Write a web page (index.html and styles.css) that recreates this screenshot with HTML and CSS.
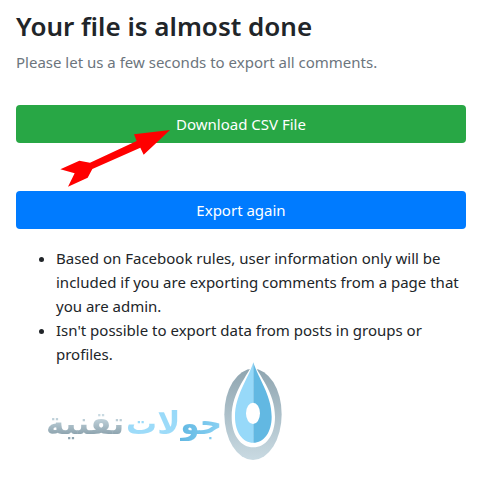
FILE: index.html
```html
<!DOCTYPE html>
<html lang="en">
<head>
    <meta charset="UTF-8">
    <meta name="viewport" content="width=device-width, initial-scale=1.0">
    <title>Your file is almost done</title>
    <link rel="stylesheet" href="styles.css">
</head>
<body>
    <main class="container">
        <h1>Your file is almost done</h1>
        <p class="text-muted">Please let us a few seconds to export all comments.</p>
        <div class="download">
            <button type="button" class="btn btn-success">Download CSV File</button>
            <svg class="arrow" viewBox="60 99 333 180" aria-hidden="true">
                <path fill="#ff0000" d="M390 105 282 118 290 138 150 203 118 197 61 223 104 235 84 275 143 248 157 222 301 158 311 179Z"/>
            </svg>
        </div>
        <button type="button" class="btn btn-primary">Export again</button>
        <ul class="notes">
            <li>Based on Facebook rules, user information only will be included if you are exporting comments from a page that you are admin.</li>
            <li>Isn't possible to export data from posts in groups or profiles.</li>
        </ul>
        <div class="logo" dir="rtl" lang="ar">
            <svg class="drop" viewBox="39 22 174 294" aria-hidden="true">
                <defs>
                    <linearGradient id="ring" x1="0" y1="0" x2="0" y2="1">
                        <stop offset="0" stop-color="#8fa5b0"/>
                        <stop offset="1" stop-color="#c9dae2"/>
                    </linearGradient>
                </defs>
                <ellipse cx="126" cy="179" rx="86" ry="137" fill="url(#ring)"/>
                <path fill="#ffffff" d="M127 22C111 62 62 112 62 186C62 242 90 278 127 278S192 242 192 186C192 112 143 62 127 22Z"/>
                <path fill="#97d9f9" d="M127 23C111 74 72 122 72 186C72 234 96 264 127 264Z"/>
                <path fill="#62b8e2" d="M127 23C143 74 182 122 182 186C182 234 158 264 127 264Z"/>
                <ellipse cx="126" cy="176" rx="21" ry="32" fill="#ffffff"/>
            </svg>
            <div class="logo-text">
                <div><span class="deep">جو</span><span class="light">لات</span></div>
                <div><span class="grey">تقنية</span></div>
            </div>
        </div>
    </main>
</body>
</html>
```
FILE: styles.css
```css
* {
    box-sizing: border-box;
}
body {
    margin: 0;
    background-color: #ffffff;
    color: #212529;
    font-family: "Segoe UI", "Noto Sans", sans-serif;
    font-size: 15px;
    line-height: 24px;
}
.container {
    padding: 9px 12px 20px 16px;
}
h1 {
    margin: 0 0 7px;
    font-size: 26px;
    font-weight: 600;
    line-height: 34px;
}
.text-muted {
    margin: 0 0 31px;
    color: #6c757d;
}
.download {
    position: relative;
    margin-bottom: 48px;
}
.btn {
    display: block;
    width: 100%;
    padding: 7px 12px;
    border: none;
    border-radius: 4px;
    color: #ffffff;
    font-family: inherit;
    font-size: 15px;
    line-height: 24px;
    cursor: pointer;
}
.btn-success {
    background-color: #28a745;
}
.btn-primary {
    background-color: #007bff;
}
.arrow {
    position: absolute;
    top: 23px;
    left: 44px;
    width: 111px;
    pointer-events: none;
}
.notes {
    margin: 17px 0 0;
    padding-left: 40px;
}
.logo {
    display: flex;
    align-items: center;
    gap: 2px;
    width: fit-content;
    margin: -4px 0 0 30px;
}
.drop {
    width: 58px;
    height: 98px;
}
.logo-text {
    display: flex;
    gap: 2px;
    padding-top: 24px;
    font-family: "DejaVu Sans", sans-serif;
    font-size: 31px;
    font-weight: 700;
    line-height: 60px;
    white-space: nowrap;
}
.logo-text span {
    background-clip: text;
    -webkit-background-clip: text;
    color: transparent;
}
.deep {
    background-image: linear-gradient(to left, #8bd2f4, #62b8e2);
}
.light {
    background-image: linear-gradient(#97d9f9, #9fdcf9);
}
.grey {
    background-image: linear-gradient(#c9dae2 30%, #8fa5b0 80%);
}
```
